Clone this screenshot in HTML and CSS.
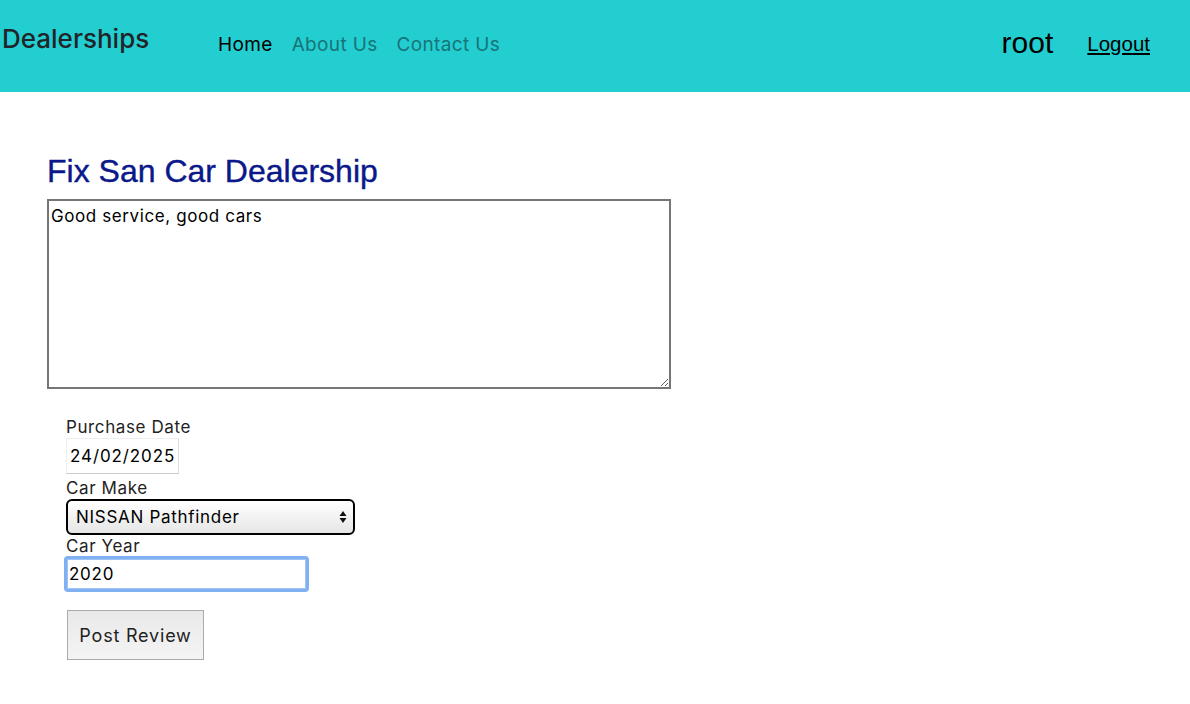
FILE: index.html
```html
<!DOCTYPE html>
<html>
<head>
<meta charset="utf-8">
<link rel="stylesheet" href="styles.css">
</head>
<body>
<nav class="navbar">
  <div class="brand">Dealerships</div>
  <ul class="nav-links">
    <li class="active">Home</li>
    <li>About Us</li>
    <li>Contact Us</li>
  </ul>
  <div class="user">
    <span class="username">root</span>
    <a class="logout" href="#">Logout</a>
  </div>
</nav>
<main class="content">
  <h1 class="title">Fix San Car Dealership</h1>
  <textarea class="review" rows="7">Good service, good cars</textarea>
  <div class="fields">
    <label class="lbl">Purchase Date</label>
    <div class="date-input">24/02/2025</div>
    <label class="lbl">Car Make</label>
    <div class="select">
      <span>NISSAN Pathfinder</span>
      <svg class="arrows" width="8" height="14" viewBox="0 0 8 14"><path d="M4 1 L7.5 6 H0.5 Z" fill="#111"/><path d="M4 13 L7.5 8 H0.5 Z" fill="#111"/></svg>
    </div>
    <label class="lbl">Car Year</label>
    <div class="year-input">2020</div>
    <button class="post">Post Review</button>
  </div>
</main>
</body>
</html>
```
FILE: styles.css
```css
* { box-sizing: border-box; }
body {
  margin: 0;
  font-family: "Inter", "Liberation Sans", sans-serif;
  color: #212529;
  background: #fff;
}
.navbar {
  height: 92px;
  background: #23ced1;
  display: flex;
  align-items: flex-start;
  padding: 0 40px 0 2px;
}
.brand {
  font-size: 26px;
  font-weight: 500;
  color: #212529;
  margin-top: 23px;
  width: 216px;
}
.nav-links {
  list-style: none;
  display: flex;
  gap: 19px;
  margin: 33px 0 0;
  padding: 0;
  font-size: 19px;
  letter-spacing: 0.35px;
  color: #187477;
}
.nav-links li.active { color: #000; }
.user {
  margin-left: auto;
  display: flex;
  align-items: baseline;
  gap: 34px;
  margin-top: 26px;
  font-family: "Liberation Sans", Arial, sans-serif;
}
.username { font-size: 30px; color: #000; }
.logout { font-size: 20.5px; color: #000; text-decoration: underline; position: relative; top: -2px; }
.content {
  padding: 61px 0 0 47px;
}
.title {
  margin: 0 0 9px;
  font-family: "Liberation Sans", Arial, sans-serif;
  font-size: 32px;
  font-weight: 500;
  color: #0a1889;
  -webkit-text-stroke: 0.4px #0a1889;
}
.review {
  display: block;
  width: 624px;
  height: 190px;
  border: 2px solid #767676;
  font-family: "Inter", "Liberation Sans", sans-serif;
  font-size: 17px;
  letter-spacing: 0.6px;
  padding: 5px 2px;
  color: #000;
  resize: both;
  margin: 0;
}
.fields {
  padding: 28px 0 0 19px;
  display: flex;
  flex-direction: column;
  align-items: flex-start;
}
.lbl {
  font-size: 17px;
  letter-spacing: 0.6px;
  color: #222;
  line-height: 20px;
}
.date-input {
  margin-top: 1px;
  width: 113px;
  height: 36px;
  border: 1px solid #eee;
  border-bottom-color: #ccc;
  border-right-color: #ddd;
  padding: 7px 3px;
  font-size: 17px;
  letter-spacing: 0.9px;
  color: #000;
  margin-bottom: 4px;
}
.select {
  margin-top: 1px;
  width: 289px;
  height: 36px;
  border: 2px solid #000;
  border-radius: 6px;
  background: linear-gradient(#ffffff, #e6e6e6);
  display: flex;
  align-items: center;
  justify-content: space-between;
  padding: 0 6px 0 8px;
  font-size: 17px;
  letter-spacing: 0.7px;
  color: #000;
  margin-bottom: 1px;
}
.year-input {
  margin-top: 0;
  margin-left: -2px;
  width: 245px;
  height: 36px;
  border: 3px solid #7fb0f2;
  border-radius: 4px;
  box-shadow: inset 0 0 0 1px #9fc3f5;
  padding: 5px 2px;
  font-size: 17px;
  letter-spacing: 0.75px;
  color: #000;
}
.post {
  margin-top: 18px;
  margin-left: 1px;
  width: 137px;
  height: 50px;
  border: 1px solid #aaa;
  background: linear-gradient(#e9e9e9, #f4f4f4);
  font-family: "Inter", "Liberation Sans", sans-serif;
  font-size: 18px;
  letter-spacing: 0.8px;
  color: #222;
  padding: 0;
}
```
